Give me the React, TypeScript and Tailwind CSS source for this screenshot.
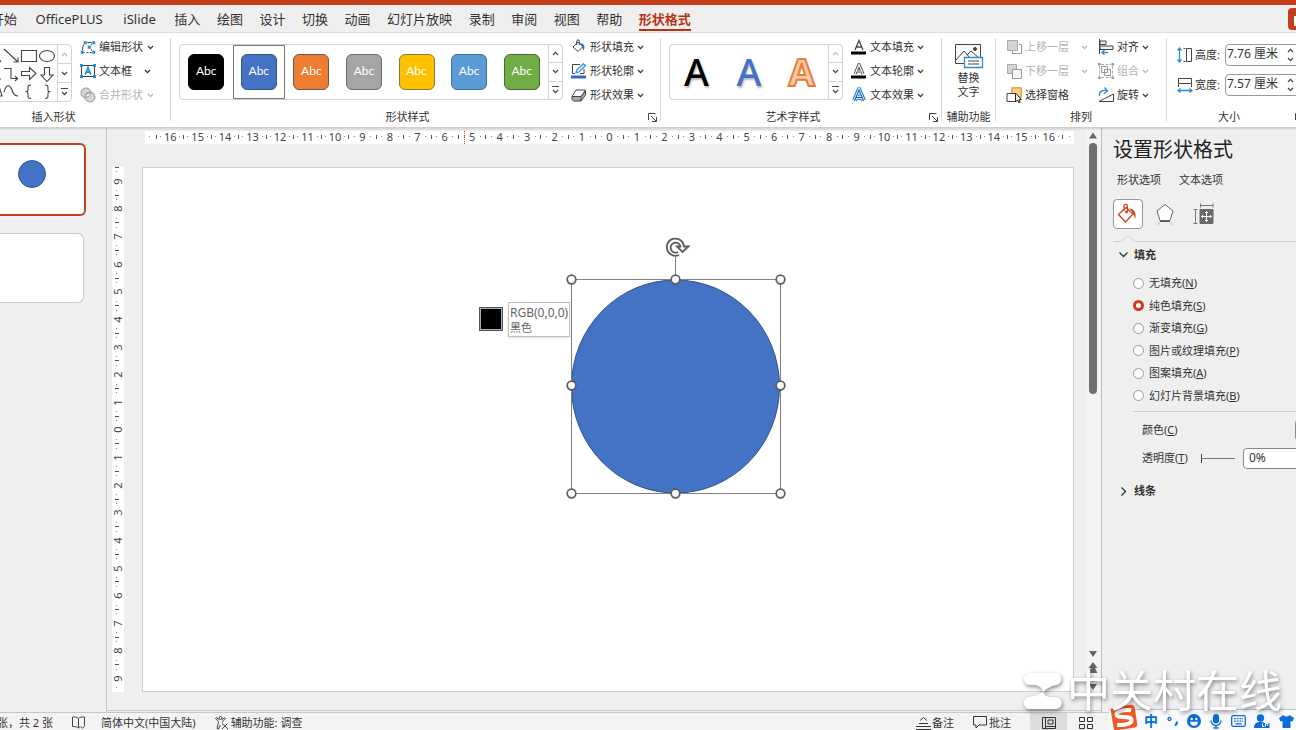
import React from "react";

const tabs = [
  "开始", "OfficePLUS", "iSlide", "插入", "绘图", "设计", "切换", "动画",
  "幻灯片放映", "录制", "审阅", "视图", "帮助", "形状格式",
];

const shapeStyles = [
  "bg-black border-black",
  "bg-[#4472c4] border-[#2f528f]",
  "bg-[#ed7d31] border-[#6b5a50]",
  "bg-[#a5a5a5] border-[#6f6f6f]",
  "bg-[#ffc000] border-[#8a7a3c]",
  "bg-[#5b9bd5] border-[#41719c]",
  "bg-[#70ad47] border-[#4a6b35]",
];

const fills = [
  ["无填充", "N"],
  ["纯色填充", "S"],
  ["渐变填充", "G"],
  ["图片或纹理填充", "P"],
  ["图案填充", "A"],
  ["幻灯片背景填充", "B"],
];

const range = (n: number) => Array.from({ length: n * 2 + 1 }, (_, i) => Math.abs(n - i));

const Chevron = ({ up = false, className = "" }: { up?: boolean; className?: string }) => (
  <svg width="7" height="5" viewBox="0 0 7 5" className={`shrink-0 ${className}`} fill="none" stroke="currentColor" strokeWidth="1.2">
    <path d={up ? "M1 4 3.5 1.3 6 4" : "M1 1 3.5 3.7 6 1"} />
  </svg>
);

const Launcher = () => (
  <button aria-label="更多选项" className="shrink-0 w-4 h-4 flex items-center justify-center">
    <svg width="9" height="9" viewBox="0 0 9 9" fill="none" stroke="#444" strokeWidth="1">
      <path d="M.5 7V.5H7.5M3 3l5 5M8.5 4v4.5H4" />
    </svg>
  </button>
);

type GroupProps = {
  label: string;
  launcher?: boolean;
  className?: string;
  children: React.ReactNode;
};

const Group = ({ label, launcher, className = "", children }: GroupProps) => (
  <section className={`shrink-0 flex flex-col justify-between pt-0.5 pb-0.5 ${className}`}>
    <div className="flex h-[72px]">{children}</div>
    <div className="flex items-center h-4">
      <h3 className="flex-1 text-center text-[11px] leading-4">{label}</h3>
      {launcher && <Launcher />}
    </div>
  </section>
);

const Separator = () => <div className="shrink-0 w-px mt-[5px] mb-1.5 bg-[#d8d8d8]" />;

const Gallery = ({ className = "", dimUp = false, children }: { className?: string; dimUp?: boolean; children: React.ReactNode }) => (
  <div className={`shrink-0 flex mt-[9px] border border-[#d4d4d4] rounded overflow-hidden ${className}`}>
    <div className="flex-1 flex justify-end">{children}</div>
    <div className="w-[14px] flex flex-col border-l border-[#d4d4d4] divide-y divide-[#d4d4d4]">
      <button aria-label="上一行" className={`flex-1 flex items-center justify-center ${dimUp ? "text-[#bbb]" : "text-[#444]"}`}>
        <Chevron up />
      </button>
      <button aria-label="下一行" className="flex-1 flex items-center justify-center text-[#444]">
        <Chevron />
      </button>
      <button aria-label="其他" className="flex-1 flex flex-col items-center justify-center gap-0.5 text-[#444]">
        <span className="w-[7px] h-px bg-[#444]" />
        <Chevron />
      </button>
    </div>
  </div>
);

type CommandProps = {
  icon: React.ReactNode;
  label: string;
  disabled?: boolean;
  arrow?: boolean;
  wide?: string;
};

const Command = ({ icon, label, disabled, arrow = true, wide = "" }: CommandProps) => (
  <button disabled={disabled} className={`flex items-center h-6 text-[11px] whitespace-nowrap ${disabled ? "text-[#b4b4b4]" : "text-[#333]"}`}>
    <span className="w-4 mr-[3px] flex justify-center">{icon}</span>
    <span className={`text-left ${wide}`}>{label}</span>
    {arrow && <Chevron className="ml-[3px]" />}
  </button>
);

/* Icons */
const Svg = ({ children, w = 16, h = 16 }: { children: React.ReactNode; w?: number; h?: number }) => (
  <svg width={w} height={h} viewBox={`0 0 ${w} ${h}`} fill="none" stroke="#444" strokeWidth="1" className="shrink-0">
    {children}
  </svg>
);

const EditShapeIcon = () => (
  <Svg>
    <path d="M2.5 12C2.500 8 3 6 5.500 3.500H13L9.500 8l3.500 5" />
    <path d="M3 13.500h10" strokeDasharray="2 1.500" />
    <path d="M3.500 2h3.500v3.500H3.500zM12 2h3.500v3.500H12zM7.500 6.500H11V10H7.500zM.5 11.500H4V15H.5zM12 11.500h3.500V15H12z" fill="#2b8dd6" stroke="#fff" strokeWidth=".5" />
  </Svg>
);

const TextBoxIcon = () => (
  <Svg>
    <path d="M1.500 2.500h13v11h-13z" />
    <path d="M5.200 11.500 8 4.500l2.800 7M6.200 9.200h3.600" stroke="#2b8dd6" strokeWidth="1.700" />
    <path d="M0 1h3v3H0zM13 1h3v3h-3zM0 12h3v3H0zM13 12h3v3h-3z" fill="#2b8dd6" stroke="none" />
  </Svg>
);

const MergeIcon = () => (
  <Svg>
    <circle cx="6" cy="6" r="5" fill="#d6d6d6" stroke="#999" />
    <circle cx="10" cy="10" r="5" fill="#d6d6d6" stroke="#999" />
    <path d="M5 10a5 5 0 0 1 6-4 5 5 0 0 1-6 4z" fill="#eee" stroke="#999" />
  </Svg>
);

const BucketIcon = () => (
  <Svg>
    <path d="M2 8 7 3l5 4.500-5 5z M5.700 6V2.200a1.300 1.300 0 0 1 2.600 0V6" />
    <path d="M9.500 5c3-.5 4 1.500 3 5.500-.5-2-1-3.500-3-5.500z" fill="#1f6fb8" stroke="#1f6fb8" />
  </Svg>
);

const OutlineIcon = () => (
  <Svg>
    <path d="M9 1.500H1.500v9H4M13 6v4.500H9" />
    <path d="M5 9.500 6 6.500 12.500.8l2 2L8 9z" fill="#e4f2fc" stroke="#2b8dd6" strokeWidth="1.200" />
    <path d="M0 12.500h15v3H0z" fill="#3a68c4" stroke="none" />
  </Svg>
);

const EffectIcon = () => (
  <Svg>
    <path d="M1 9.500v3l1.500 1.500H10l4.500-6V4L10 9.500z" fill="#aaa" />
    <path d="M1 9.500 5 3h9.500L10 9.500zM10 9.500V14" fill="#fff" />
  </Svg>
);

const LetterIcon = ({ outlined = false }: { outlined?: boolean }) => (
  <Svg>
    <path d="M4 11 8 1.500 12 11M5.500 8h5" strokeWidth={outlined ? 3 : 1.3} />
    {outlined && <path d="M4 11 8 1.500 12 11M5.500 8h5" stroke="#fff" strokeWidth="1.200" />}
    <path d="M0 12.500h15v3H0z" fill="#000" stroke="none" />
  </Svg>
);

const LetterGlowIcon = () => (
  <Svg>
    <path d="M3.500 13.500 8 3l4.500 10.500M5 10.500h6" stroke="#2b8dd6" strokeWidth="5" />
    <path d="M3.500 14 8 3l4.500 11M5 10.500h6" stroke="#fff" strokeWidth="2.600" />
    <path d="M3.500 14 8 3l4.500 11M5 10.500h6" stroke="#1a5fa8" strokeWidth="1.200" />
  </Svg>
);

const ForwardIcon = () => (
  <Svg>
    <path d="M13 5.500h2.500v9h-9V12" stroke="#999" />
    <path d="M1.500 1.500h10v10h-10z" fill="#d4d4d4" stroke="#aaa" />
  </Svg>
);

const BackwardIcon = () => (
  <Svg>
    <path d="M1.500 1.500h9v9h-9z" fill="#d4d4d4" stroke="#aaa" />
    <path d="M6.500 6.500h9v9h-9z" fill="#f6f6f6" stroke="#999" />
  </Svg>
);

const SelectPaneIcon = () => (
  <Svg>
    <path d="M6 .8h9.200V10H6z" fill="#fbd28a" stroke="#e8912d" strokeWidth="1.300" />
    <path d="M1 6.500h8.500v8H1z" fill="#fff" />
    <path d="M9.500 6v9l2-2 1.500 3 1.200-.6-1.300-2.700h2.500z" fill="#fff" stroke="#222" />
  </Svg>
);

const AlignIcon = () => (
  <Svg>
    <path d="M1.500 0v15" />
    <path d="M2 2h6v3.500H2zM2 7h13v3.500H2z" fill="#eee" />
    <path d="M10 13.500H4M6.500 11 4 13.500 6.500 16" stroke="#2b8dd6" strokeWidth="1.300" />
  </Svg>
);

const GroupIcon = () => (
  <Svg>
    <path d="M1.500 3v10M14.500 3v10M3 1.500h10M3 14.500h10" stroke="#aaa" strokeDasharray="3 1.500" />
    <path d="M3.500 3.500h6v6h-6zM6.500 6.500h6v6h-6z" stroke="#999" />
    <path d="M0 0h2.500v2.500H0zM13.500 0H16v2.500h-2.500zM0 13.500h2.500V16H0zM13.500 13.500H16V16h-2.500z" fill="#999" stroke="none" />
  </Svg>
);

const RotateIcon = () => (
  <Svg>
    <path d="M1 14.500h14.500V7z" />
    <path d="M1.500 9C.5 4 5 2.500 9 4M6.500.5 9.500 4 6 6.500" stroke="#2b8dd6" strokeWidth="1.300" />
  </Svg>
);

const HeightIcon = () => (
  <Svg>
    <path d="M2.500 1v14M.5 3.500l2-2.500 2 2.500M.5 12.500l2 2.500 2-2.500" stroke="#2b8dd6" strokeWidth="1.300" />
    <path d="M9.500 1.500h5v13h-5zM6.500 1.500h2M6.500 14.500h2" />
  </Svg>
);

const WidthIcon = () => (
  <Svg>
    <path d="M1 13.500h14M3.500 11.500 1 13.500l2.500 2M12.500 11.500l2.500 2-2.500 2" stroke="#2b8dd6" strokeWidth="1.300" />
    <path d="M1.500 1.500h13v5h-13zM1.500 7v3M14.500 7v3" />
  </Svg>
);

const AltTextIcon = () => (
  <Svg w={30} h={28}>
    <path d="M1.500 1.500h25v19h-25zM2 17l8-9 6 7M13 12l4-4 9 8" fill="#f7f7f7" />
    <circle cx="21" cy="6" r="1.500" fill="#444" />
    <path d="M10.500 14.500h18v10h-18z" fill="#fff" stroke="#2b8dd6" strokeWidth="1.300" />
    <path d="M14 18h11M14 21h11" />
  </Svg>
);

const ShapesPreview = () => (
  <svg width="58" height="56" viewBox="0 0 58 56" fill="none" stroke="#444" strokeWidth="1.100" className="shrink-0">
    <path d="M5 4l14 13M19 12.500V17h-4.500M0 14l2 3" />
    <path d="M22.500 5.500h15v11h-15z" />
    <ellipse cx="48" cy="11" rx="7.500" ry="5.500" />
    <path d="M5 23.500h7v10h6M16 31l2.500 2.500L16 36M0 34h2" />
    <path d="M22.500 26.500h8v-4l6.500 6-6.500 6v-4h-8zM45.500 22.500h5V30h3.500L48 36.500 42 30h3.500z" />
    <path d="M5 47c2-8 6-8 8-2 1 4 3 6 6 6M0 41l3 10H0" />
    <path d="M32 40c-3 0-3 1-3 4s-.5 2.500-2.500 2.500c2 0 2.500 0 2.500 3s0 4 3 4M46 40c3 0 3 1 3 4s.5 2.500 2.500 2.500c-2 0-2.500 0-2.500 3s0 4-3 4" />
  </svg>
);

const SizeField = ({ id, icon, label, value }: { id: string; icon: React.ReactNode; label: string; value: string }) => (
  <div className="flex items-center h-[22px]">
    {icon}
    <label htmlFor={id} className="ml-0.5 w-[30px] shrink-0 text-[11px]">{label}</label>
    <div className="relative shrink-0 w-[76px] h-[22px] border border-[#999] rounded bg-white">
      <input id={id} defaultValue={value} className="block w-full h-full pl-px pb-1 text-xs text-[#333] outline-none" />
      <div className="absolute right-1.5 top-0 h-full flex flex-col justify-between py-[3px] text-[#444]">
        <Chevron up />
        <Chevron />
      </div>
    </div>
  </div>
);

const Ribbon = () => (
  <div className="shrink-0 h-[95px] flex overflow-hidden bg-white border-b border-[#cfcfcf] shadow-[0_1px_2px_rgba(0,0,0,0.15)] z-10">
    <Group label="插入形状" className="w-[233px] -ml-[63px]">
      <Gallery className="ml-2 mr-2 w-[127px] h-[58px]" dimUp>
        <ShapesPreview />
      </Gallery>
      <div>
        <Command icon={<EditShapeIcon />} label="编辑形状" wide="w-[45px]" />
        <Command icon={<TextBoxIcon />} label="文本框" wide="w-[42px]" />
        <Command icon={<MergeIcon />} label="合并形状" wide="w-[45px]" disabled />
      </div>
    </Group>
    <Separator />

    <Group label="形状样式" launcher className="w-[489px]">
      <Gallery className="ml-2 mr-2 w-[384px] h-[56px]">
        {shapeStyles.map((style, i) => (
          <button
            key={style}
            className={`flex-1 flex items-center justify-center border ${i === 1 ? "border-[#777]" : "border-transparent"}`}
          >
            <span className={`w-9 h-9 pb-0.5 flex items-center justify-center rounded-md border text-white text-xs font-['Lato','Noto_Sans',sans-serif] ${style}`}>
              Abc
            </span>
          </button>
        ))}
      </Gallery>
      <div>
        <Command icon={<BucketIcon />} label="形状填充" />
        <Command icon={<OutlineIcon />} label="形状轮廓" />
        <Command icon={<EffectIcon />} label="形状效果" />
      </div>
    </Group>
    <Separator />

    <Group label="艺术字样式" launcher className="w-[280px]">
      <Gallery className="ml-2 mr-2 w-[174px] h-[56px]" dimUp>
        <button className="flex-1 pb-0.5 text-[38px] leading-none font-medium text-black [text-shadow:1px_2px_2px_#bbb]">A</button>
        <button className="flex-1 pb-0.5 text-[38px] leading-none font-medium text-[#4472c4] [text-shadow:1px_2px_2px_#bbb]">A</button>
        <button className="flex-1 pb-0.5 text-[38px] leading-none font-bold text-[#f8cbad] [-webkit-text-stroke:2px_#ed7d31]">A</button>
      </Gallery>
      <div>
        <Command icon={<LetterIcon />} label="文本填充" />
        <Command icon={<LetterIcon outlined />} label="文本轮廓" />
        <Command icon={<LetterGlowIcon />} label="文本效果" />
      </div>
    </Group>
    <Separator />

    <Group label="辅助功能" className="w-[53px]">
      <button className="flex-1 flex flex-col items-center pt-2 text-[11px] leading-[14px]">
        <AltTextIcon />
        <span>替换</span>
        <span>文字</span>
      </button>
    </Group>
    <Separator />

    <Group label="排列" className="w-[170px]">
      <div className="ml-[10px] w-[92px]">
        <Command icon={<ForwardIcon />} label="上移一层" wide="w-[53px]" disabled />
        <Command icon={<BackwardIcon />} label="下移一层" wide="w-[53px]" disabled />
        <Command icon={<SelectPaneIcon />} label="选择窗格" arrow={false} />
      </div>
      <div>
        <Command icon={<AlignIcon />} label="对齐" />
        <Command icon={<GroupIcon />} label="组合" disabled />
        <Command icon={<RotateIcon />} label="旋转" />
      </div>
    </Group>
    <Separator />

    <Group label="大小" launcher className="w-[140px]">
      <div className="ml-[10px] mt-[9px] flex flex-col gap-2">
        <SizeField id="shape-height" icon={<HeightIcon />} label="高度:" value="7.76 厘米" />
        <SizeField id="shape-width" icon={<WidthIcon />} label="宽度:" value="7.57 厘米" />
      </div>
    </Group>
  </div>
);

const Thumbnails = () => (
  <aside className="shrink-0 w-[107px] border-r border-[#c8c8c8] pt-[15px]">
    <button aria-label="幻灯片 1" className="block w-[86px] h-[73px] bg-white border-2 border-l-0 border-[#c43e1c] rounded-r-md">
      <span className="block w-7 h-7 ml-[18px] -mt-3 rounded-full bg-[#4472c4] border border-[#2f528f]" />
    </button>
    <button aria-label="幻灯片 2" className="block w-[84px] h-[70px] mt-[17px] bg-white border border-l-0 border-[#c8c8c8] rounded-r-md" />
  </aside>
);

const HorizontalRuler = () => (
  <div className="h-[13px] flex items-center px-1 pb-0.5 bg-white text-[11px] leading-none text-[#444]">
    <span className="w-px h-px mr-1.5 bg-[#888]" />
    {range(16).map((n, i) => (
      <React.Fragment key={i}>
        <span className="w-px h-1 bg-[#555]" />
        <span className="flex-1 flex items-center justify-evenly">
          <span className="w-px h-px bg-[#888]" />
          {n}
          <span className="w-px h-px bg-[#888]" />
        </span>
      </React.Fragment>
    ))}
    <span className="w-px h-1 bg-[#555]" />
    <span className="w-px h-px ml-1.5 bg-[#888]" />
  </div>
);

const VerticalRuler = () => (
  <div className="w-3 pr-0.5 flex flex-col items-center bg-white text-[11px] leading-none text-[#444]">
    {range(9).map((n, i) => (
      <React.Fragment key={i}>
        <span className="h-px w-1 bg-[#555]" />
        <span className="flex-1 flex flex-col items-center justify-evenly">
          <span className="w-px h-px bg-[#888]" />
          <span className="-rotate-90 leading-[11px]">{n}</span>
          <span className="w-px h-px bg-[#888]" />
        </span>
      </React.Fragment>
    ))}
  </div>
);

const handles = [[6, 34], [110, 34], [215, 34], [6, 140], [215, 140], [6, 248], [110, 248], [215, 248]];

const Slide = () => (
  <div className="relative flex-1 bg-white border border-[#cdcdcd] overflow-hidden">
    {/* Selected ellipse with its frame */}
    <svg className="absolute left-[422px] top-[77px]" width="225" height="256" viewBox="0 0 225 256" fill="none" stroke="#7f7f7f">
      <ellipse cx="110.500" cy="141.500" rx="104" ry="106.500" fill="#4472c4" stroke="#2f528f" />
      <path d="M6.500 34.500h209v214h-209zM110.500 34V11" />
      {handles.map(([x, y]) => (
        <circle key={`${x}-${y}`} cx={x + 0.5} cy={y + 0.5} r="4.300" fill="#fff" stroke="#5c5c5c" strokeWidth="1.700" />
      ))}
    </svg>
    <svg className="absolute left-[522px] top-[69px]" width="26" height="22" viewBox="0 0 26 22" fill="none" stroke="#5c5c5c" strokeWidth="1.800">
      <circle cx="10.500" cy="10.500" r="9.500" fill="#fff" stroke="none" />
      <path d="M14 18A8.600 8.600 0 1 1 19 9.500H23.500L17.500 15 12 9.500h3.500A5 5 0 1 0 13 15" />
    </svg>

    {/* Eyedropper preview */}
    <div className="absolute left-[336px] top-[139px] w-6 h-6 bg-black border border-[#555] outline outline-1 -outline-offset-2 outline-[#aab]" />
    <div className="absolute left-[365px] top-[134px] px-px py-0.5 h-[35px] whitespace-nowrap bg-white border border-[#bfbfbf] shadow-sm text-xs leading-[15px] text-[#666]">
      RGB(0,0,0)
      <br />
      <span className="text-[11px]">黑色</span>
    </div>
  </div>
);

const Scrollbar = () => (
  <div className="shrink-0 w-4 flex flex-col items-center pt-1 pb-[18px] bg-[#f3f3f3] text-[#666]">
    <svg width="10" height="7" viewBox="0 0 10 7" fill="currentColor"><path d="M1 6.500 5 .5l4 6z" /></svg>
    <div className="w-2 h-[251px] mt-1 rounded bg-[#707070]" />
    <div className="flex-1" />
    <svg width="10" height="44" viewBox="0 0 10 44" fill="currentColor">
      <path d="M1 3h8L5 9zM5 14l4.500 6H7l2.500 5h-9L3 20H.5zM1 32h8v1.500H1zM1 36h8l-4 6z" />
    </svg>
  </div>
);

const Editor = () => (
  <div className="flex-1 min-w-0 flex mb-px border-b border-[#c8c8c8]">
    <div className="flex-1 min-w-0 flex flex-col pt-[3px] pb-[18px] pl-[5px]">
      <div className="relative ml-[33px]">
        <HorizontalRuler />
        <span className="absolute left-[319px] top-0 h-[13px] border-l border-dotted border-[#d83b01]" />
      </div>
      <div className="flex-1 flex mt-[23px] gap-[18px]">
        <VerticalRuler />
        <Slide />
      </div>
    </div>
    <div className="w-[11px]" />
    <Scrollbar />
  </div>
);

const FormatPane = () => (
  <aside className="shrink-0 w-[195px] h-full border-l border-[#bdbdbd] pl-[11px] overflow-hidden text-[11px] text-[#333]">
    <h2 className="mt-2 text-xl leading-7 text-[#222] whitespace-nowrap">设置形状格式</h2>
    <div className="flex gap-[18px] ml-1 mt-2 leading-4">
      <button>形状选项</button>
      <button>文本选项</button>
    </div>

    <div className="flex items-center gap-3 mt-[11px]">
      <button aria-label="填充与线条" className="w-[30px] h-[30px] flex items-center justify-center bg-white border border-[#999] rounded">
        <svg width="22" height="22" viewBox="0 0 22 22" fill="none" stroke="#d04423" strokeWidth="1.300">
          <path d="M1.500 11.500 9 4.500l7 6.500-7.500 8z M7 8V3a1.700 1.700 0 0 1 3.400 0v6" />
          <circle cx="9.500" cy="9" r=".8" fill="#d04423" />
          <path d="M12 5.500c5 0 8 4 6 11-.5-4-2-7-6-11z" fill="#d04423" stroke="none" />
        </svg>
      </button>
      <button aria-label="效果" className="w-5">
        <svg width="20" height="22" viewBox="0 0 20 22" fill="#fff" stroke="#666">
          <path d="M10 1.500 18 8l-3 9.500H5L2 8z" />
          <path d="M5 18.500h10" stroke="#555" />
          <path d="M4.500 19 3 22M15.500 19l1.500 3" stroke="#bbb" />
        </svg>
      </button>
      <button aria-label="大小与属性" className="ml-1.5">
        <svg width="22" height="22" viewBox="0 0 22 22" fill="none" stroke="#777">
          <path d="M7 2.500h13M7.500.5v4M20 .5v4M2.500 6v14M.5 6.500h4M.5 20.500h4" />
          <path d="M7 6.500h13v14H7z" fill="#6a6a6a" stroke="#6a6a6a" />
          <path d="M13.500 8.500v10M8.500 13.500h10M12 10l1.500-1.500L15 10M12 17l1.500 1.500L15 17M10 12l-1.500 1.500L10 15M17 12l1.500 1.500L17 15" stroke="#fff" />
        </svg>
      </button>
    </div>

    <div className="flex mt-1.5 h-[7px]">
      <svg width="30" height="7" viewBox="0 0 30 7" fill="none" stroke="#ccc">
        <path d="M0 6.500h8.500L15 .5l6.500 6H30" />
      </svg>
      <div className="flex-1 border-b border-[#ccc]" />
    </div>

    <button className="flex items-center gap-1.5 ml-1.5 mt-[5px] h-4 font-bold">
      <svg width="9" height="6" viewBox="0 0 9 6" fill="none" stroke="#333" strokeWidth="1.300"><path d="M.5.5l4 4 4-4" /></svg>
      填充
    </button>

    <fieldset className="mt-[9px] ml-5 h-[135px] flex flex-col">
      {fills.map(([name, key], i) => (
        <label key={key} className="flex-1 flex items-center gap-[5px] whitespace-nowrap">
          <input
            type="radio"
            name="fill"
            defaultChecked={i === 1}
            className="appearance-none w-[11px] h-[11px] rounded-full bg-white border border-[#999] checked:border-[3px] checked:border-[#d13a1a]"
          />
          <span>{name}(<u>{key}</u>)</span>
        </label>
      ))}
    </fieldset>

    <div className="ml-5 mt-1 border-t border-[#ccc]" />

    <div className="flex items-center ml-[29px] mt-[7px] h-[22px]">
      <span className="w-[153px] shrink-0">颜色(<u>C</u>)</span>
      <button aria-label="填充颜色" className="shrink-0 w-10 h-[22px] border border-[#888] bg-white rounded-sm" />
    </div>

    <div className="flex items-center ml-[29px] mt-[7px] h-[21px]">
      <label htmlFor="transparency" className="w-[59px] shrink-0">透明度(<u>T</u>)</label>
      <input
        type="range"
        aria-label="透明度"
        defaultValue={0}
        className="appearance-none shrink-0 w-[34px] h-px bg-[#777] [&::-webkit-slider-thumb]:appearance-none [&::-webkit-slider-thumb]:w-px [&::-webkit-slider-thumb]:h-[9px] [&::-webkit-slider-thumb]:bg-[#444]"
      />
      <input id="transparency" defaultValue="0%" className="ml-2 shrink-0 w-[70px] h-[21px] pl-[5px] pb-0.5 bg-white border border-[#888] rounded outline-none text-xs" />
    </div>

    <button className="flex items-center gap-[7px] ml-2 mt-[14px] h-4 font-bold">
      <svg width="6" height="9" viewBox="0 0 6 9" fill="none" stroke="#333" strokeWidth="1.300"><path d="M.5.5l4 4-4 4" /></svg>
      线条
    </button>
  </aside>
);

const StatusBar = () => (
  <footer className="shrink-0 h-[18px] flex items-center overflow-hidden bg-[#f3f3f3] border-t border-[#c8c8c8] text-[11px] leading-[17px] whitespace-nowrap">
    <span className="-ml-[3px] pt-0.5">张，共 2 张</span>
    <button aria-label="拼写检查" className="ml-[18px] mt-0.5">
      <svg width="15" height="13" viewBox="0 0 15 13" fill="none" stroke="#444">
        <path d="M7.500 2.500C6 1 4 .8 1.500 1v9.500c2.500 0 4.500.2 6 1.500V2.500C9 1 11 .8 13.500 1v8.500M7.500 12c.5-.7 1-1 2-1.200M10 11l1.500 1.300L14 9.500" />
      </svg>
    </button>
    <button className="ml-[15px] pt-0.5">简体中文(中国大陆)</button>
    <button className="flex items-center gap-0.5 ml-[18px] pt-0.5">
      <svg width="15" height="14" viewBox="0 0 15 14" fill="none" stroke="#444">
        <circle cx="6.500" cy="2" r="1.500" />
        <path d="M1.500 2.500c2 2 3 2 3 4L3 12.500l1.500.5 2-4M11.500 2.500c-2 2-3 2-3 4M1.500 2.500l1-.8L5 3.500M11.500 2.500l-1-.8L8 3.500M8 7.500l6 5.500M13.500 7.500 8 13" />
      </svg>
      辅助功能: 调查
    </button>

    <div className="flex-1" />

    <div className="flex items-center h-full w-[381px]">
      <button className="flex items-center pt-0.5">
        <svg width="17" height="14" viewBox="0 0 17 14" fill="none" stroke="#333"><path d="M5 4.500 8.500 1.500l3.500 3M4 7.500h9M1 10.500h15M1 13.500h15" /></svg>
        备注
      </button>
      <button className="flex items-center gap-0.5 ml-[19px] pt-0.5">
        <svg width="14" height="13" viewBox="0 0 14 13" fill="none" stroke="#333"><path d="M.5.500h13v8.500H6L3 12V9H.5z" /></svg>
        批注
      </button>
      <button aria-label="普通视图" className="ml-[19px] w-[37px] h-full pt-0.5 flex items-center justify-center bg-[#dcdcdc]">
        <svg width="14" height="12" viewBox="0 0 14 12" fill="none" stroke="#333"><path d="M.5.500h13v11H.5zM3.500.5v11M6 3h5v4H6zM3.500 9.500h10" /></svg>
      </button>
      <button aria-label="幻灯片浏览" className="ml-3 pt-0.5">
        <svg width="14" height="12" viewBox="0 0 14 12" fill="none" stroke="#333"><path d="M.5.500h5v4h-5zM8.500.500h5v4h-5zM.5 7.500h5v4h-5zM8.500 7.500h5v4h-5z" /></svg>
      </button>
    </div>
  </footer>
);

const InputMethodBar = () => (
  <div className="absolute right-0 bottom-0 w-[187px] h-[21px] flex items-center bg-[#f8f9fb] border-t border-[#a9c8e8] text-[#0a6cd6]">
    <svg width="30" height="28" viewBox="0 0 30 28" className="shrink-0 -mt-1.5">
      <g transform="rotate(-9 15 14)">
        <rect x="3" y="3" width="24" height="23" rx="3" fill="#ee5a24" />
        <path d="M23 8.500C16 6.500 8 7 8 10.500c0 4.500 14 2.500 14 7.500 0 4-8 4.500-15 2.500" fill="none" stroke="#fff" strokeWidth="4" />
      </g>
    </svg>
    <div className="flex-1 flex items-center justify-between pl-[5px] pr-0.5 pt-0.5">
      <span className="text-sm leading-none font-bold">中</span>
      <svg width="12" height="12" viewBox="0 0 12 12" fill="none" stroke="currentColor" strokeWidth="1.300">
        <circle cx="2.500" cy="4" r="1.500" />
        <path d="M9.500 6.500c1 1.500 0 3-1.500 4" strokeWidth="2" />
      </svg>
      <svg width="14" height="14" viewBox="0 0 14 14">
        <circle cx="7" cy="7" r="7" fill="currentColor" />
        <circle cx="4.700" cy="5" r="1.200" fill="#fff" /><circle cx="9.300" cy="5" r="1.200" fill="#fff" />
        <path d="M3 7.800h8a4 4 0 0 1-8 0z" fill="#fff" />
      </svg>
      <svg width="12" height="15" viewBox="0 0 12 15" fill="none" stroke="currentColor" strokeWidth="1.300">
        <rect x="3.500" y=".7" width="5" height="8" rx="2.500" fill="currentColor" />
        <path d="M1 6.500a5 5 0 0 0 10 0M6 11.500V14M3.500 14h5" />
      </svg>
      <svg width="15" height="12" viewBox="0 0 15 12" fill="none" stroke="currentColor" strokeWidth="1.300">
        <rect x=".7" y=".7" width="13.600" height="10.600" rx="1.500" />
        <path d="M3 3.700h9M3 6.200h9" strokeDasharray="1.800 1" /><path d="M4.500 8.800h6" />
      </svg>
      <svg width="16" height="15" viewBox="0 0 16 15" fill="currentColor">
        <circle cx="6.500" cy="4" r="3.700" />
        <path d="M0 14c0-4 2-6 6.500-6 2 0 3 0 4 1h5v5z" />
        <path d="M8.500 9.500v3h2M11.500 12.500v-3h3M12.500 11h2" stroke="#fff" fill="none" />
      </svg>
      <svg width="15" height="13" viewBox="0 0 15 13" fill="currentColor"><path d="M4.500 0 0 3l1.500 3.500L3.500 6v7h8V6l2 .5L15 3l-4.500-3c-1.500 2-4.500 2-6 0z" /></svg>
    </div>
  </div>
);

const Watermark = () => (
  <div className="absolute right-[14px] bottom-5 flex items-center gap-1 text-white pointer-events-none drop-shadow-[1px_2px_2px_rgba(0,0,0,0.45)]">
    <svg width="40" height="38" viewBox="0 0 40 38" fill="currentColor">
      <path d="M7 1h25c8 0 8 11 1 12-5 1-10 4-13 7 1 3 4 5 8 5h4c9 0 9 12 0 12H7c-8 0-8-11-1-12 5-1 11-3 14-5-1-4-4-7-9-7H7C-1 13-1 1 7 1z" />
    </svg>
    <span className="text-[43px] leading-[38px]">中关村在线</span>
  </div>
);

const App = () => {
  return (
    <div className="relative h-screen flex flex-col overflow-hidden bg-[#efefef] text-[#333] font-['Noto_Sans','Noto_Sans_CJK_SC',sans-serif]">
      <div className="shrink-0 h-[5px] bg-[#c43e1c]" />
      <header className="shrink-0 h-7 flex items-center justify-between border-b border-[#e0e0e0]">
        <nav className="w-[700px] -ml-[9px] h-full flex justify-between items-center text-[13px] whitespace-nowrap">
          {tabs.map((tab, i) => (
            <button
              key={tab}
              className={`h-6 pt-0.5 leading-5 border-b-2 ${i === 1 || i === 2 ? "px-0.5" : ""} ${i === 13 ? "font-bold text-[#b7330f] border-[#b7330f]" : "border-transparent"}`}
            >
              {tab}
            </button>
          ))}
        </nav>
        <button aria-label="录制" className="w-2 h-[22px] pl-1.5 flex items-center bg-[#c43e1c] rounded-l">
          <span className="w-0.5 h-2.5 mt-1 bg-white" />
        </button>
      </header>
      <Ribbon />

      <main className="flex-1 min-h-0 flex">
        <Thumbnails />
        <Editor />
        <FormatPane />
      </main>

      <StatusBar />
      <InputMethodBar />
      <Watermark />
    </div>
  );
};

export default App;
